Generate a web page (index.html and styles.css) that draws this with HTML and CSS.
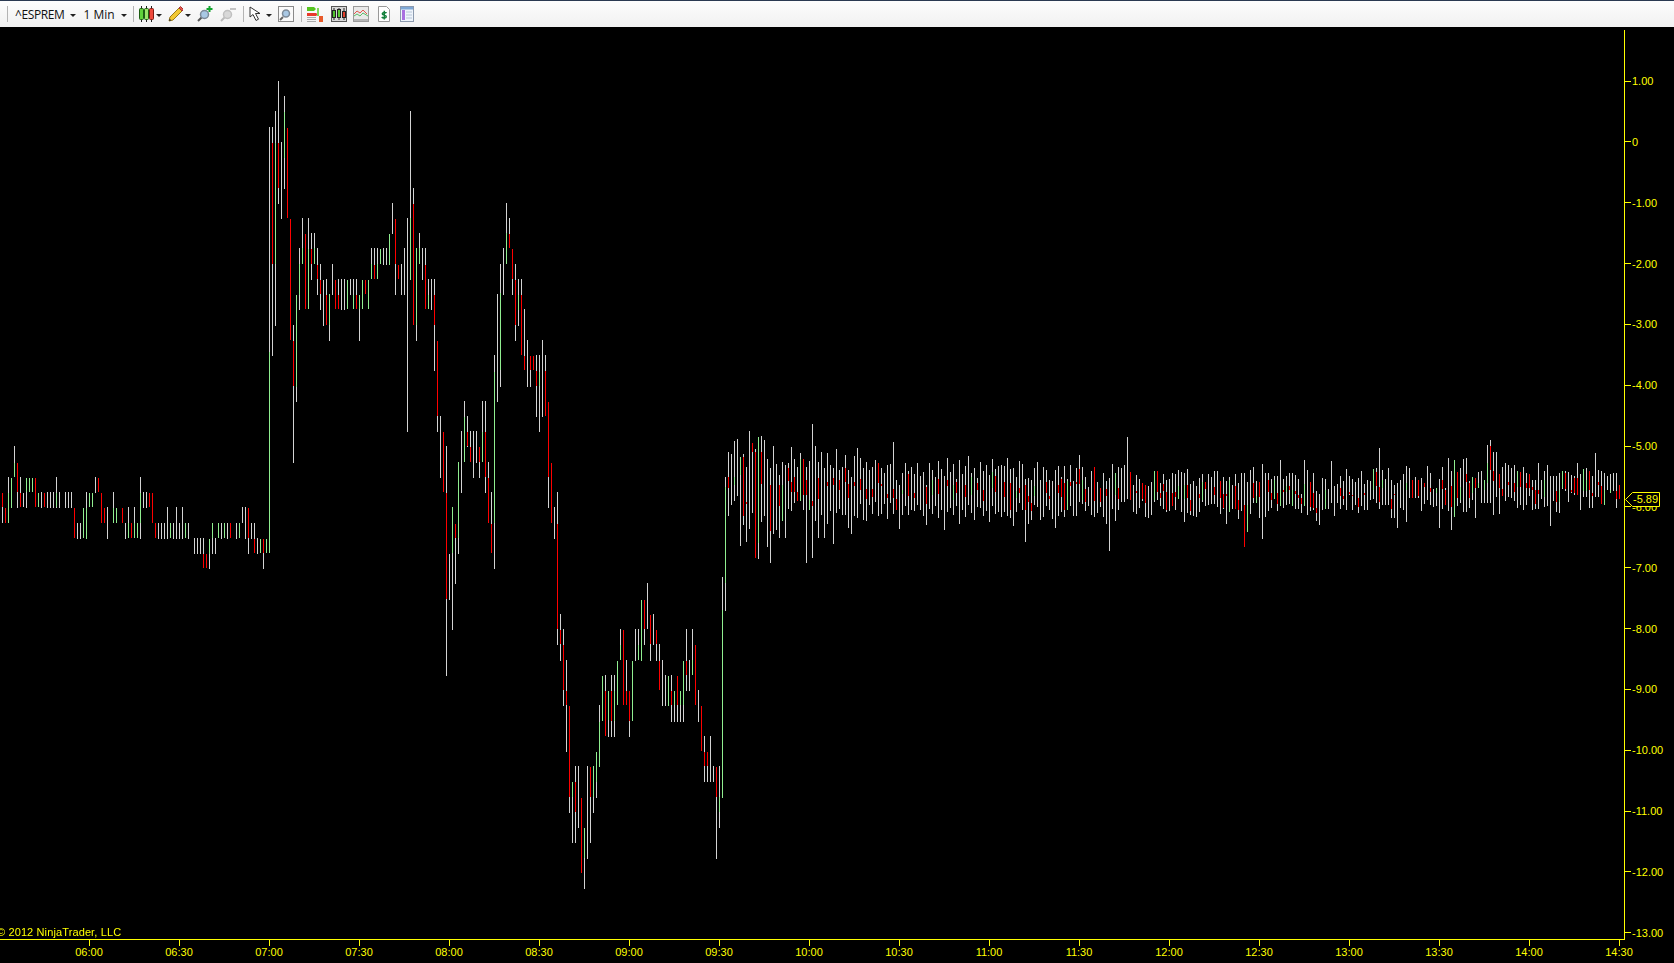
FILE: index.html
```html
<!DOCTYPE html>
<html lang="en">
<head>
    <title>^ESPREM 1 Min</title>
    <meta charset="UTF-8">
    <link rel="stylesheet" href="styles.css">
</head>
<body>
    <div class="toolbar">
        <span class="sep first"></span>
        <span class="label symbol">^ESPREM</span><span class="caret"></span>
        <span class="label period">1 Min</span><span class="caret"></span>
        <span class="sep"></span>

        <svg class="icon candles" viewBox="0 0 15 16">
            <path d="M2.500 0v16M7.500 0v16M12.500 0v16" stroke="#222"/>
            <rect x="0.500" y="2.500" width="4" height="11" rx="1" fill="#5fd03a" stroke="#1c5c12"/>
            <rect x="5.500" y="2.500" width="4" height="11" rx="1" fill="#9be36a" stroke="#1c5c12"/>
            <rect x="10.500" y="2.500" width="4" height="11" rx="1" fill="#ee4a3c" stroke="#7c1a12"/>
        </svg>
        <span class="caret"></span>

        <svg class="icon pencil" viewBox="0 0 15 16">
            <path d="M1 15l1-4L11 2l3 3-9 9z" fill="#f2c832" stroke="#9a7a1a"/>
            <path d="M11 2l1.500-1.500 3 3L14 5z" fill="#e2574c" stroke="#a33"/>
            <path d="M1 15l.6-2.400 1.800 1.800z" fill="#333"/>
        </svg>
        <span class="caret"></span>

        <svg class="icon zoom-in" viewBox="0 0 16 16">
            <path d="M1 15l4-4" stroke="#555" stroke-width="2"/>
            <circle cx="7.500" cy="8.500" r="4" fill="#a9c8e4" stroke="#7d8a98" stroke-width="1.500"/>
            <path d="M12.500 0v6M9.500 3h6" stroke="#12a52e" stroke-width="2"/>
        </svg>
        <svg class="icon zoom-out" viewBox="0 0 16 16">
            <path d="M1 15l4-4" stroke="#bbb" stroke-width="2"/>
            <circle cx="7.500" cy="8.500" r="4" fill="#d8d8d8" stroke="#c0c0c0" stroke-width="1.500"/>
            <path d="M10 3h6" stroke="#c4c4c4" stroke-width="2"/>
        </svg>
        <span class="sep"></span>

        <svg class="icon cursor" viewBox="0 0 14 16">
            <path d="M1 1l0 10 3-2.500 3 6 2.500-1.300-3-5.700h4.500z" fill="#fff" stroke="#333"/>
        </svg>
        <span class="caret"></span>

        <svg class="icon find" viewBox="0 0 16 16">
            <rect x="0.500" y="0.500" width="15" height="15" fill="#fafafa" stroke="#8a8a8a"/>
            <path d="M2 14l3-3" stroke="#666" stroke-width="2"/>
            <circle cx="8" cy="7.500" r="3.500" fill="#a9c8e4" stroke="#7d8a98" stroke-width="1.500"/>
        </svg>
        <span class="sep"></span>

        <svg class="icon series" viewBox="0 0 16 16">
            <path d="M0 1h7l2 2-2 2H0z" fill="#55c41e"/>
            <path d="M0 7h9l2 1.500-2 1.500H0z" fill="#e83a2a"/>
            <path d="M0 11.500h9M0 13.500h9M0 15.500h9" stroke="#aaa"/>
            <rect x="10" y="2" width="2" height="8" fill="#7ed957"/>
            <rect x="12" y="10" width="4" height="6" fill="#e85a2a"/>
        </svg>
        <svg class="icon framed" viewBox="0 0 16 16">
            <rect x="0.500" y="0.500" width="15" height="15" fill="#d8d8d8" stroke="#555"/>
            <path d="M3 2v12M8 2v12M13 2v12" stroke="#222"/>
            <rect x="1.500" y="4.500" width="3" height="7" fill="#4fc22e" stroke="#222"/>
            <rect x="6.500" y="3.500" width="3" height="8" fill="#58c832" stroke="#222"/>
            <rect x="11.500" y="5.500" width="3" height="6" fill="#e4402c" stroke="#222"/>
        </svg>
        <svg class="icon analyzer" viewBox="0 0 16 16">
            <rect x="0.500" y="0.500" width="15" height="15" fill="#e9e9e9" stroke="#9a9a9a"/>
            <path d="M1 13h14v2H1z" fill="#b5b5b5"/>
            <path d="M1 8l3-3 3 2 3-3 4 4" fill="none" stroke="#e2574c"/>
            <path d="M1 10l3-2 3 2 3-3 5 3" fill="none" stroke="#5bbf6a"/>
        </svg>
        <svg class="icon dollar" viewBox="0 0 12 16">
            <path d="M0.500 0.500h8l3 3v12h-11z" fill="#fff" stroke="#999"/>
            <path d="M8.500 7.200c-.5-1-3.800-1.300-4.200.4-.4 1.800 4.400 1.200 4 3.200-.4 1.700-3.800 1.300-4.500.2M6.300 4.800v8.600" fill="none" stroke="#12803c" stroke-width="1.500"/>
        </svg>
        <svg class="icon grid" viewBox="0 0 14 16">
            <rect x="0.500" y="0.500" width="13" height="15" fill="#eef4fb" stroke="#8c9aae"/>
            <rect x="1" y="1" width="12" height="2.500" fill="#7fa8d6"/>
            <rect x="2" y="4" width="3" height="10" fill="#a86fe0"/>
            <path d="M6 6h6M6 9h6M6 12h6" stroke="#b6c4d6"/>
        </svg>
    </div>

    <div class="workspace">
        <div class="plot">
            <canvas id="bars" width="1624" height="912"></canvas>
            <span class="copyright">© 2012 NinjaTrader, LLC</span>
        </div>
        <div class="y-axis">
            <ul class="y-ticks">
                <li>1.00</li><li>0</li><li>-1.00</li><li>-2.00</li><li>-3.00</li>
                <li>-4.00</li><li>-5.00</li><li>-6.00</li><li>-7.00</li><li>-8.00</li>
                <li>-9.00</li><li>-10.00</li><li>-11.00</li><li>-12.00</li><li>-13.00</li>
            </ul>
            <div class="price-tag">
                <svg viewBox="0 0 35 15" width="35" height="15"><path d="M0.500 7.500L7.500 0.500H34.500V14.500H7.500z" fill="#000" stroke="#ff0"/></svg>
                <span>-5.89</span>
            </div>
        </div>
    </div>

    <ul class="x-axis">
        <li>06:00</li><li>06:30</li><li>07:00</li><li>07:30</li><li>08:00</li><li>08:30</li>
        <li>09:00</li><li>09:30</li><li>10:00</li><li>10:30</li><li>11:00</li><li>11:30</li>
        <li>12:00</li><li>12:30</li><li>13:00</li><li>13:30</li><li>14:00</li><li>14:30</li>
    </ul>

    <script src="chart.js"></script>
</body>
</html>
```

FILE: styles.css
```css
* {
    box-sizing: border-box;
}
html, body {
    margin: 0;
    height: 963px;
    overflow: hidden;
    background-color: #000;
}
ul {
    list-style: none;
    margin: 0;
    padding: 0;
}

/* toolbar */
.toolbar {
    display: flex;
    align-items: center;
    height: 27px;
    border-top: 1px solid #2b3a52;
    background: linear-gradient(#fdfdfd, #f1f1f1);
    font-family: "Open Sans", "Liberation Sans", sans-serif;
    font-size: 12px;
    letter-spacing: -0.4px;
    color: #111;
}
.sep {
    width: 1px;
    height: 16px;
    margin: 0 5px 0 6px;
    background-color: #b4b4b4;
}
.sep.first {
    margin: 0 7px;
}
.caret {
    width: 0;
    height: 0;
    margin: 2px 0 0 6px;
    border: 3px solid transparent;
    border-top: 3px solid #222;
    border-bottom: 0;
}
.icon + .caret {
    margin-left: 2px;
}
.cursor + .caret {
    margin-left: 3px;
}
.period {
    margin-left: 7px;
    letter-spacing: 0;
}
.icon {
    display: block;
    flex: none;
    height: 16px;
}
.candles { width: 15px; }
.pencil { width: 15px; margin-left: 6px; }
.zoom-in { width: 16px; margin-left: 6px; }
.zoom-out { width: 16px; margin: 0 1px 0 7px; }
.cursor { width: 14px; }
.find { width: 16px; margin: 0 1px 0 6px; }
.series { width: 16px; }
.framed { width: 16px; margin-left: 8px; }
.analyzer { width: 16px; margin-left: 6px; }
.dollar { width: 12px; margin-left: 9px; }
.grid { width: 14px; margin-left: 10px; }

/* chart */
.workspace {
    display: flex;
    height: 912px;
}
.plot {
    position: relative;
    width: 1624px;
    flex: none;
}
#bars {
    display: block;
}
.copyright, .y-axis, .x-axis {
    font-family: "Liberation Sans", Arial, sans-serif;
    font-size: 11px;
    color: #ff0;
}
.copyright {
    position: absolute;
    left: -3px;
    bottom: 0;
    line-height: 13px;
    letter-spacing: 0.12px;
    white-space: nowrap;
}
.y-axis {
    position: relative;
    flex: 1;
    margin-top: 3px;
    border-left: 1px solid #ff0;
}
.y-ticks {
    display: flex;
    flex-direction: column;
    justify-content: space-between;
    height: 100%;
    padding-top: 45px;
}
.y-ticks li {
    display: flex;
    align-items: center;
    height: 12px;
    line-height: 12px;
}
.y-ticks li::before {
    content: "";
    width: 6px;
    height: 1px;
    margin-right: 1px;
    background-color: #ff0;
}
.price-tag {
    position: absolute;
    left: 0;
    top: 462px;
    width: 35px;
    height: 15px;
}
.price-tag svg {
    display: block;
}
.price-tag span {
    position: absolute;
    left: 8px;
    top: 1px;
    line-height: 13px;
}
.x-axis {
    display: flex;
    width: 1625px;
    height: 24px;
    padding-left: 44px;
    border-top: 1px solid #ff0;
}
.x-axis li {
    flex: none;
    width: 90px;
    line-height: 13px;
    text-align: center;
}
.x-axis li::before {
    content: "";
    display: block;
    width: 1px;
    height: 6px;
    margin-left: 45px;
    background-color: #ff0;
}
```

FILE: chart.js
```js
// 1 minute bars, one every 3px. y values are pixels from "base", in thirds of a pixel
const bars = [];
const WICK = '#d3d3d3';
const BODY = { r: '#ff0000', g: '#90ee90' };

function addBars(first, base, rows) {
    rows.forEach((row, k) => {
        if (!row) return;
        const toY = (v) => Math.round(base + v / 3);
        bars.push({
            x: 2 + 3 * (first + k),
            high: toY(row[0]),
            low: toY(row[1]),
            color: BODY[row[2]],
            top: row[2] ? toY(row[3]) : 0,
            bottom: row[2] ? toY(row[4]) : 0
        });
    });
}

addBars(0, 440, [
    [160,250,'r',160,200],[205,250,'r',205,250],[110,250,'g',160,250],[113,203,'g',113,203],[18,110,'g',70,110],
    [70,205,'r',70,155],[110,200,'r',160,200],[160,200],[115,205,'g',115,155],[115,155,'g',115,155],
    [115,155,'g',115,155],[115,200,'r',115,200],[160,200,'g',160,200],[155,205],[160,200,'r',160,200],
    [155,205],[155,205],[155,205],[110,205,'g',160,200],[155,205],
    null,[155,205],[155,205],[155,205],[205,295,'r',205,295],
    [250,297],[250,297],[205,295,'g',205,295],[155,297,'g',205,297],[160,200,'g',160,200],
    [160,200,'g',160,200],[110,160],[115,155,'r',115,155],[160,250,'r',160,250],[205,250,'r',205,250],
    [200,297],null,[155,250,'g',205,250],[205,250,'g',205,250],null,
    [205,250,'r',205,250],[250,297],[200,295,'g',250,295],[250,295,'r',250,295],[200,295,'g',250,295],
    [250,295,'g',250,295],[110,297,'g',160,250],[155,205],[155,205],[160,200,'r',160,200],
    [160,250,'r',160,250],[250,295,'r',250,295],[250,297],[250,297],[250,297],
    [200,297],[250,295,'g',250,295],[250,297],[200,297],[250,297],
    [200,297],[250,295,'g',250,295],[250,297],null,[295,342],
    [295,342],[295,342],[295,385,'r',342,385],[342,385,'r',342,385],[297,387,'g',297,342],
    [250,342,'g',250,295],[295,342],[250,295,'g',250,295],[250,297],[250,295,'g',250,295],
    [250,297],[250,295,'r',250,295],null,[250,297],[250,295,'g',250,295],
    [200,250],[200,297],[205,342,'r',205,295],[250,297],[250,340,'r',297,340],
    [295,342],[297,340,'g',297,340],[297,387,'r',297,340],[297,340,'g',297,340]
]);

addBars(89, 75, [
    [156,1434,'g',830,1434],[156,843,'r',205,567],[108,752,'g',205,567],[18,387,'r',205,340],[200,432],
    [63,342,'g',110,250],[160,430,'r',160,430],[432,795,'r',432,795],[750,1163,'r',797,932],[660,980,'g',660,935],
    [520,705,'g',567,660],[430,567,'g',520,567],[477,702,'r',477,702],[430,702,'g',522,702],[475,615,'r',522,567],
    [475,567,'g',520,567],[520,660,'r',570,612],[567,705,'r',615,657],[615,752],[612,750,'r',660,750],
    [657,797,'g',657,750],[567,660],[615,702,'r',615,702],[612,702,'r',660,702],[612,705],
    [612,705],[615,702,'g',615,702],[612,660],[612,702,'g',660,702],[612,702,'r',660,702],
    [660,797,'g',660,702],[615,702,'g',615,702],[615,657,'r',615,657],[615,702,'g',615,702],[520,612,'g',567,612],
    [520,612,'r',570,612],[520,612,'g',567,612],[522,567,'g',522,567],[520,570],[520,570],
    [477,570,'g',477,570],[385,477],[432,660,'r',432,567],[570,612,'r',570,612],[567,660],
    [520,660],[430,1070],[108,615,'g',430,615],[340,750,'r',387,750],[520,797,'g',520,750],
    [475,567,'g',520,567],[520,615],[520,702,'r',570,702],[612,702,'g',660,702]
]);

addBars(143, 190, [
    [267,360],[267,542,'r',315,405],[453,725,'r',453,678],[678,863],[725,905,'r',725,905],
    [768,1458,'r',908,1227],[1092,1230],[950,1320,'g',950,1090],[1002,1182,'r',1002,1045],[815,1092,'g',815,1045],
    [723,908],[633,815,'g',680,815],[678,770,'r',725,768],[723,815,'r',770,815],[723,863],
    [723,818],[770,863,'r',770,815],[633,815,'g',725,815],[633,908,'r',725,860],[815,1000,'r',863,998],
    [906,1090,'r',1002,1088],[495,1137,'g',545,1000],[312,635],[222,590,'g',310,540],[174,315],
    [39,222,'g',130,222],[84,174,'r',132,174],[177,315,'r',177,267],[222,453,'r',270,405],[267,408,'g',315,360],
    [267,495,'r',315,495],[357,540,'r',497,540],[450,590],[497,590,'r',497,540],[497,540,'r',497,540],
    [495,680,'r',543,588],[495,725,'g',545,588],[450,680],[495,678,'r',543,678],[635,953,'r',635,860],
    [818,998,'r',818,998],[950,1047]
]);

addBars(185, 570, [
    [-234,225,'r',-138,177],[132,272,'r',180,222],[177,408,'r',225,360],[270,545,'r',362,405],[408,728,'r',408,680],
    [636,818,'g',636,680],[588,818,'r',636,725],[588,773],[684,908,'r',684,908],[773,956,'g',773,863],
    [588,866],[590,818,'r',590,680],[588,728,'g',588,680],[546,683,'g',546,635],[405,590,'g',455,590],
    [318,453,'g',318,453],[315,497,'r',362,497],[362,500,'g',362,450],[315,500,'r',362,453],[315,500,'g',362,453],
    [273,405,'g',273,405],[177,270,'g',225,270],[180,405,'r',180,405],[270,405,'r',362,405],[362,500,'r',362,453],
    [273,453,'g',273,453],[177,272],[177,270,'g',225,270],[90,272,'g',90,272],[90,225,'r',90,177],
    [39,177],[135,272,'r',135,222],[132,225],[180,272,'r',180,222],[222,360,'r',272,360],
    [270,408],[315,408],[318,408,'g',318,408],[315,456,'r',362,405],[362,456,'g',362,405],
    [318,456,'r',318,405],[362,456,'g',362,405],[273,456,'g',273,405],[177,362,'r',273,315],[270,362],
    [177,315,'g',270,315],[225,405,'r',225,405],[360,456],[408,543,'r',408,543],[498,636,'r',546,588],
    [546,636,'r',546,588],[498,636],[588,636],[590,866,'r',590,680],[588,773,'g',680,725],
    [21,683,'g',120,683],[-279,122,'g',-249,40]
]);

addBars(242, 420, [
    [96,288,'r',172,203],[102,255],[63,243,'g',172,195],[57,228],[111,378,'g',111,165],
    [102,315,'r',111,288],[140,366,'r',245,252],[33,327],[69,279,'r',69,95],[87,414,'r',95,414],
    [51,417,'g',51,370],[48,306,'r',96,192],[60,288],[117,381],[144,430,'r',195,333],
    [78,342],[132,330],[165,354,'r',195,258],[126,303,'g',195,303],[135,354],
    [129,267,'r',144,183],[81,273,'r',186,216],[117,249,'r',171,216],[141,243,'r',216,243],[99,243,'g',117,243],
    [117,270,'r',117,225],[141,430,'r',180,225],[123,270,'g',240,270],[12,414,'r',243,258],[78,303],
    [126,354,'r',174,237],[96,285],[144,354],[99,312,'r',186,198],[135,273],
    [144,372,'r',174,195],[87,279],[150,267,'r',180,210],[141,285],[105,285,'r',144,186],
    [150,324,'r',192,234],[171,342],[108,288,'r',186,198],[84,294],[114,252,'r',177,210],
    [144,300],[126,303,'r',207,237],[150,255],[141,282,'r',207,231],[120,246],
    [129,288,'r',129,189],[144,282,'r',192,198],[159,252],[135,297,'r',222,234],[132,249],
    [66,282,'r',207,234],[180,270,'r',237,270],[195,327],[159,285,'g',210,222],[129,258],
    [153,285,'r',162,228],[141,270],[162,273,'r',219,234],[129,255],[168,270],
    [156,288],[195,315,'r',201,252]
]);

addBars(309, 420, [
    [129,267],[150,282,'g',180,225],[171,258],[123,294,'r',177,222],[147,270],
    [168,330],[114,276,'r',180,198],[156,264],[132,285,'g',195,240],[177,258,'r',186,219],
    [120,312],[162,270],[138,291,'r',195,231],[108,255],[159,279,'g',171,225],
    [144,300],[174,261,'r',189,210],[126,264],[153,288,'r',210,243],[135,273],
    [165,306],[117,258,'g',156,204],[147,282,'r',168,216],[138,276]
]);

addBars(333, 430, [
    [105,261],[108,246,'r',156,201],[84,258],[117,264,'r',159,240],[114,288],
    [141,246,'g',183,204],[93,219,'r',174,189],[102,240],[147,336,'r',165,240],[144,282,'r',198,216],
    [150,270,'r',219,243],[114,225,'g',168,198],[96,231],[150,270],[111,261],
    [120,228,'r',156,189],[150,240,'r',198,207],[153,267],[120,294],[108,258,'r',165,189],
    [141,246,'r',147,201],[108,261,'r',159,240],[147,240,'g',153,240],[105,228,'r',156,168],[153,258],
    [114,258,'r',156,162],[75,216,'r',117,162],[111,222,'g',150,210],[141,243,'r',177,216],[171,228],
    [123,255],[111,261,'r',111,213],[156,249],[174,231,'r',174,216],[129,261],
    [153,282,'r',177,198],[144,363],[102,237],[129,273,'g',129,195],[111,240,'r',174,207],
    [114,216],[105,216],[21,207],[126,210,'r',126,210],[165,246],
    [135,252,'r',183,189],[147,234],[159,213,'r',159,207],[165,261,'r',165,219],[168,264],
    [156,255],[123,216,'g',123,210],[123,210,'r',123,186],[159,228,'r',189,204],[132,237,'r',162,183],
    [150,246,'r',186,240],[147,243],[129,228,'r',189,228],[132,240,'r',186,201],[120,207,'g',168,207],
    [126,246],[129,276,'g',165,207],[117,249,'r',165,204],[162,255,'r',210,243],[153,258],
    [168,261],[144,246,'r',192,204],[132,216,'g',156,210],[156,228,'r',156,177],[132,225],
    [141,222],[123,222,'r',171,195],[123,231],[153,252,'r',153,204],[141,237,'r',192,234],
    [153,282,'r',192,198],[141,246,'g',150,246],[165,237],[132,237,'r',168,237],[159,267,'r',210,240],
    [129,243],[129,351,'r',225,351],[156,306,'g',225,306],[120,252],[111,219,'r',159,204],
    [153,219,'g',198,219],[156,264,'r',156,201],[102,327],[129,261],[129,243,'r',150,186],
    [147,234,'r',189,210],[138,207,'g',150,207],[138,243,'r',189,222],[90,228,'g',180,228],[147,234,'r',180,186],
    [138,225,'g',168,186],[129,222,'r',168,180],[129,228,'g',180,228],[135,237,'r',183,192],[147,237,'r',195,204],
    [192,249,'r',204,222],[90,228,'g',162,228],[120,255],[156,243,'r',156,231],[129,240,'r',189,234],
    [183,273,'r',234,249],[192,285]
]);

addBars(440, 430, [
    [144,240],[147,237,'g',180,237],[177,237],[93,219],[168,258],
    [162,219],[138,237,'r',174,198],[153,225,'r',198,207],[117,240],[138,195,'r',186,192],
    [147,240,'r',195,198],[156,225],[144,249,'r',204,231],[123,228],[162,240,'r',189,195],
    [150,240],[153,210],[117,207,'g',117,180],[114,219,'r',126,168],[54,237,'r',171,216],
    [120,225,'g',150,175],[147,225],[114,225],[150,264,'r',207,237],[165,264,'r',192,195],
    [159,294],[150,234],[132,240],[108,276,'g',160,180],[114,204],
    [150,204,'r',150,204],[141,204],[150,204,'r',150,198],[144,243],[159,222,'r',159,171],
    [108,210],[129,225,'r',174,186],[177,231],[174,228,'g',174,190],[147,294],
    [111,237,'r',150,177],[174,225,'r',180,225],[84,243],[123,300,'r',168,230],[90,261,'g',90,261],
    [126,228,'r',126,204],[114,219,'g',170,210],[87,246],[84,246,'r',132,156],[153,234,'r',160,205],
    [141,210,'g',141,190],[144,264,'r',144,174],[126,174,'g',160,174],[123,219],[150,219,'g',150,180],
    [45,219,'g',100,160],[30,219,'r',48,120],[66,255,'r',123,153],[66,201],[132,252,'r',132,174],
    [111,198,'r',177,198],[99,213],[105,201,'r',156,165],[114,204],[105,213,'r',159,186],
    [123,234,'g',123,170],[126,225,'r',126,171],[111,240],[129,225,'r',159,174],[132,198,'r',132,174],
    [150,240,'r',171,180],[150,237,'r',180,222],[99,237,'r',180,192],[150,207],[123,231,'g',150,200],
    [105,228],[138,288],[138,213],[138,246,'r',183,216],[129,249,'g',180,216],
    [123,177,'g',123,175],[123,183,'r',129,177],[126,216],[135,190,'r',180,186],[138,195,'r',144,189],
    [99,195,'r',144,195],[132,240],[117,201,'g',117,183],[114,201,'g',150,183],[123,234,'r',123,180],
    [138,234,'r',189,198],[69,201],[120,201,'r',156,165],[123,222,'r',168,222],[129,225,'g',180,225],
    [138,180],[132,189,'g',180,189],[129,183],[129,234,'r',183,207],[165,207,'r',165,207]
]);

function drawBars() {
    const ctx = document.getElementById('bars').getContext('2d');
    const offset = 27; // the canvas starts under the toolbar
    for (const bar of bars) {
        ctx.fillStyle = WICK;
        ctx.fillRect(bar.x, bar.high - offset, 1, bar.low - bar.high);
        if (bar.color) {
            ctx.fillStyle = bar.color;
            ctx.fillRect(bar.x, bar.top - offset, 1, bar.bottom - bar.top);
        }
    }
}

drawBars();
```
